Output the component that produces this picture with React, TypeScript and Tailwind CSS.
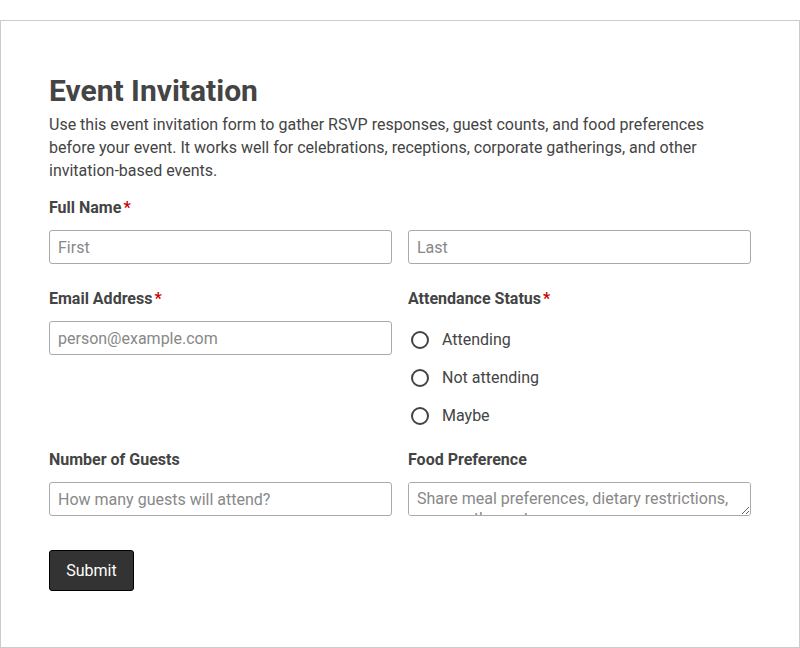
import { useState } from "react";

const Label = ({ text, required }: { text: string; required?: boolean }) => (
  <div className="h-6 text-base font-bold leading-6 text-[#444]">
    {text}
    {required && <span className="ml-0.5 text-[#c00]">*</span>}
  </div>
);

const inputCls =
  "h-[34px] w-full rounded-[3px] border border-[#aaa] bg-white px-2 text-base text-[#333] placeholder:text-[#888] outline-none [font-family:Roboto,sans-serif]";

export default function App() {
  const [status, setStatus] = useState("");

  return (
    <div className="bg-white pt-5 [font-family:Roboto,sans-serif] text-[#444]">
      <div className="h-[628px] border border-[#ccc] px-12 pt-[52px]">
        <h1 className="text-[30px] font-bold leading-9 text-[#444]">Event Invitation</h1>
        <p className="mt-1 text-base leading-[23px] text-[#444]">
          Use this event invitation form to gather RSVP responses, guest counts, and food preferences before
          your event. It works well for celebrations, receptions, corporate gatherings, and other invitation-based
          events.
        </p>

        <div className="mt-[14px]">
          <Label text="Full Name" required />
          <div className="mt-[10px] grid grid-cols-2 gap-4">
            <input className={inputCls} placeholder="First" />
            <input className={inputCls} placeholder="Last" />
          </div>
        </div>

        <div className="mt-[23px] grid grid-cols-2 gap-4">
          <div>
            <Label text="Email Address" required />
            <input className={`${inputCls} mt-[10px]`} placeholder="person@example.com" />
          </div>
          <div>
            <Label text="Attendance Status" required />
            <div className="mt-[17px] flex flex-col gap-[14px]">
              {["Attending", "Not attending", "Maybe"].map((o) => (
                <label key={o} className="flex h-6 items-center gap-[13px] pl-[3px]">
                  <span
                    onClick={() => setStatus(o)}
                    className="flex h-[18px] w-[18px] items-center justify-center rounded-full border-2 border-[#444]"
                  >
                    {status === o && <span className="h-2 w-2 rounded-full bg-[#444]" />}
                  </span>
                  <span className="text-base text-[#444]">{o}</span>
                </label>
              ))}
            </div>
          </div>
        </div>

        <div className="mt-[20px] grid grid-cols-2 gap-4">
          <div>
            <Label text="Number of Guests" />
            <input className={`${inputCls} mt-[10px]`} placeholder="How many guests will attend?" />
          </div>
          <div>
            <Label text="Food Preference" />
            <textarea
              className={`${inputCls} mt-[10px] block resize-y py-[6px] leading-5`}
              placeholder="Share meal preferences, dietary restrictions, or any other notes"
            />
          </div>
        </div>

        <button className="mt-[34px] h-[41px] w-[85px] rounded-[3px] border border-black bg-[#333] text-base text-white">
          Submit
        </button>
      </div>
    </div>
  );
}
